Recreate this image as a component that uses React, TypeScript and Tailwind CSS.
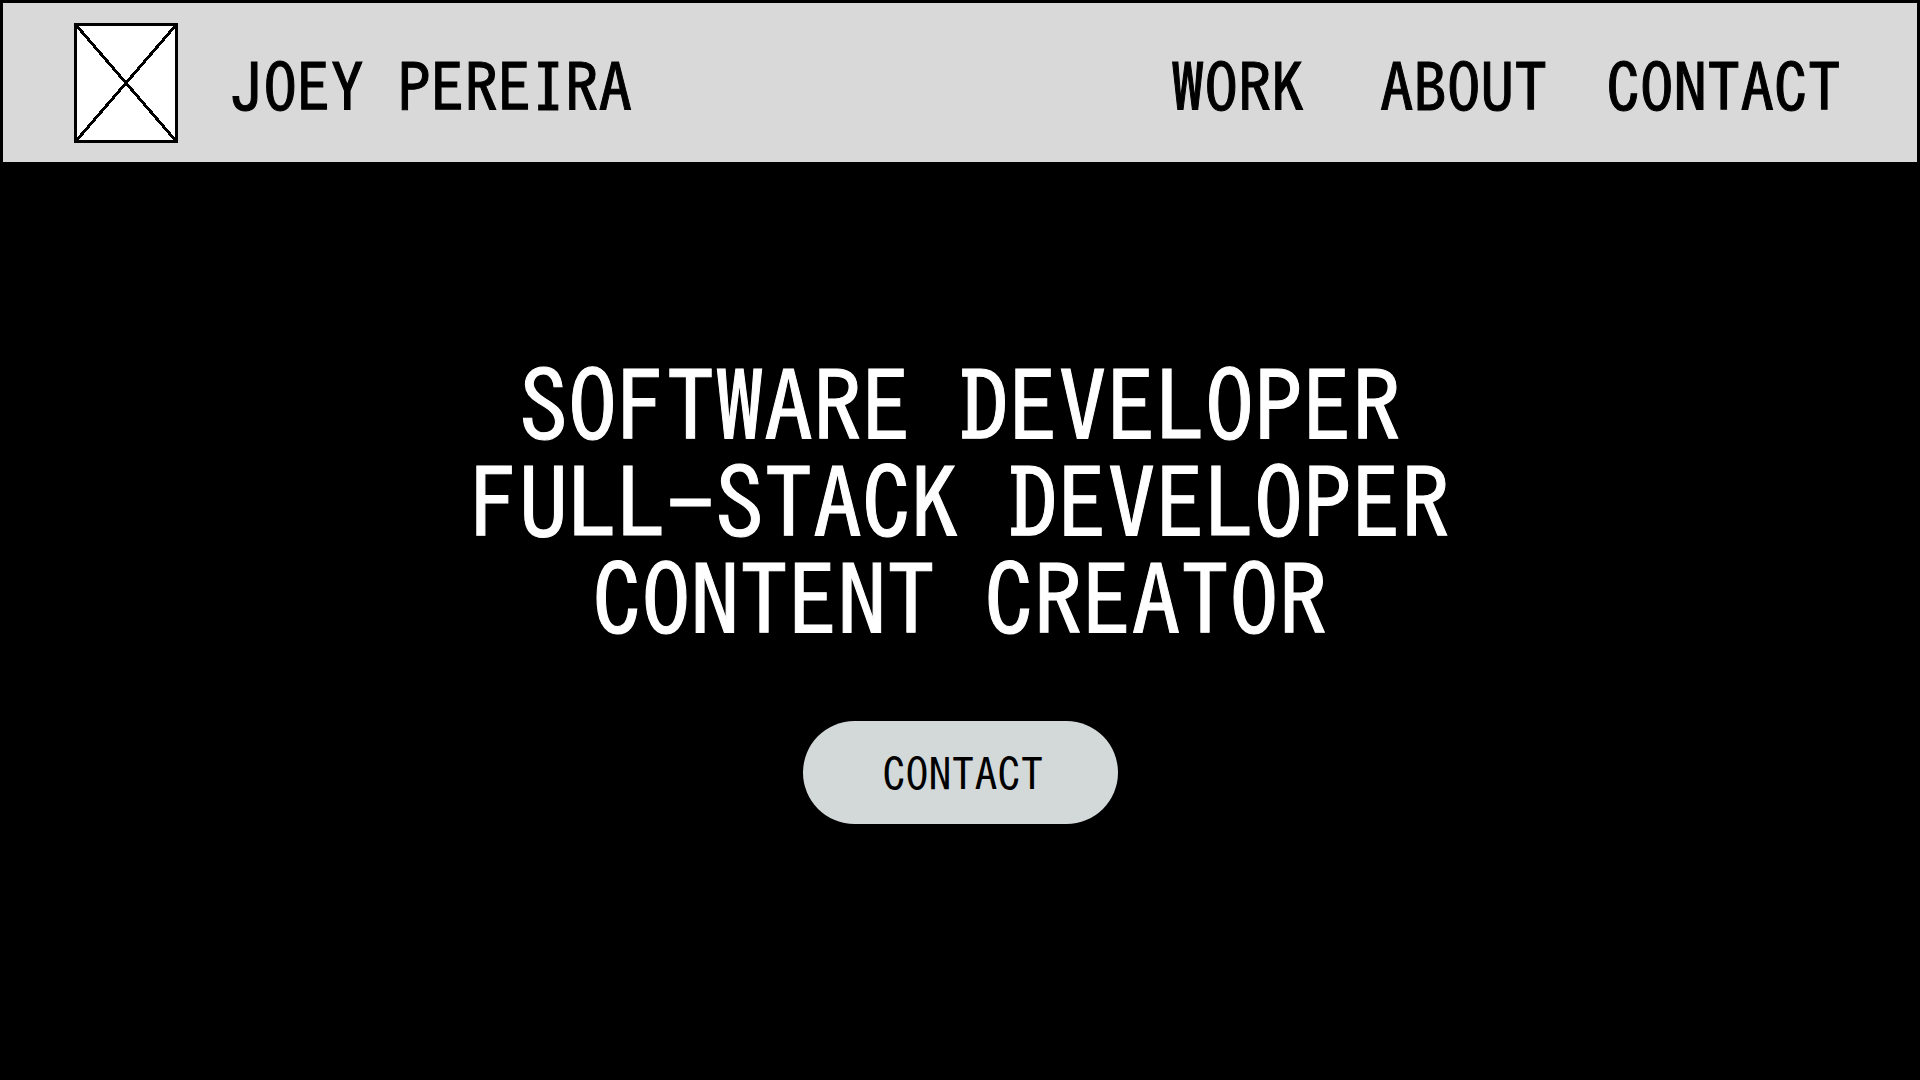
const links = [
  { label: "WORK", gap: "mr-[75px]" },
  { label: "ABOUT", gap: "mr-[59px]" },
  { label: "CONTACT", gap: "" },
];

function Logo() {
  return (
    <svg viewBox="0 0 104 120" className="h-[120px] w-[104px] shrink-0" shapeRendering="crispEdges" aria-hidden="true">
      <rect x="1.5" y="1.5" width="101" height="117" fill="#fff" stroke="#000" strokeWidth="3" />
      <path d="M2 2L102 118M102 2L2 118" stroke="#000" strokeWidth="3" />
    </svg>
  );
}

export default function App() {
  return (
    <div className="flex min-h-screen flex-col bg-black font-['IPAGothic','Noto_Sans_Mono_CJK_JP','Noto_Sans_CJK_JP',monospace]">
      <header className="flex items-center justify-between border-3 border-b-0 border-black bg-[#d9d9d9] pt-5 pb-[19px] pr-[76px] pl-[71px] text-[67px] leading-[90px] text-black [-webkit-text-stroke:1px_black]">
        <div className="flex items-center gap-[52px]">
          <Logo />
          <span className="pt-[10px]">JOEY PEREIRA</span>
        </div>
        <nav className="flex items-center pt-[10px]">
          {links.map((l) => (
            <a key={l.label} href={"#" + l.label.toLowerCase()} className={l.gap}>
              {l.label}
            </a>
          ))}
        </nav>
      </header>
      <main className="flex flex-col items-center pt-[196px]">
        <h1 className="text-center text-[98px] leading-[97px] text-white [-webkit-text-stroke:1px_white]">
          SOFTWARE DEVELOPER
          <br />
          FULL-STACK DEVELOPER
          <br />
          CONTENT CREATOR
        </h1>
        <button type="button" className="mt-[72px] h-[103px] w-[315px] rounded-full bg-[#d3d9d9] pt-[3px] pl-[6px] text-[46px] leading-[60px] text-black">
          CONTACT
        </button>
      </main>
    </div>
  );
}
